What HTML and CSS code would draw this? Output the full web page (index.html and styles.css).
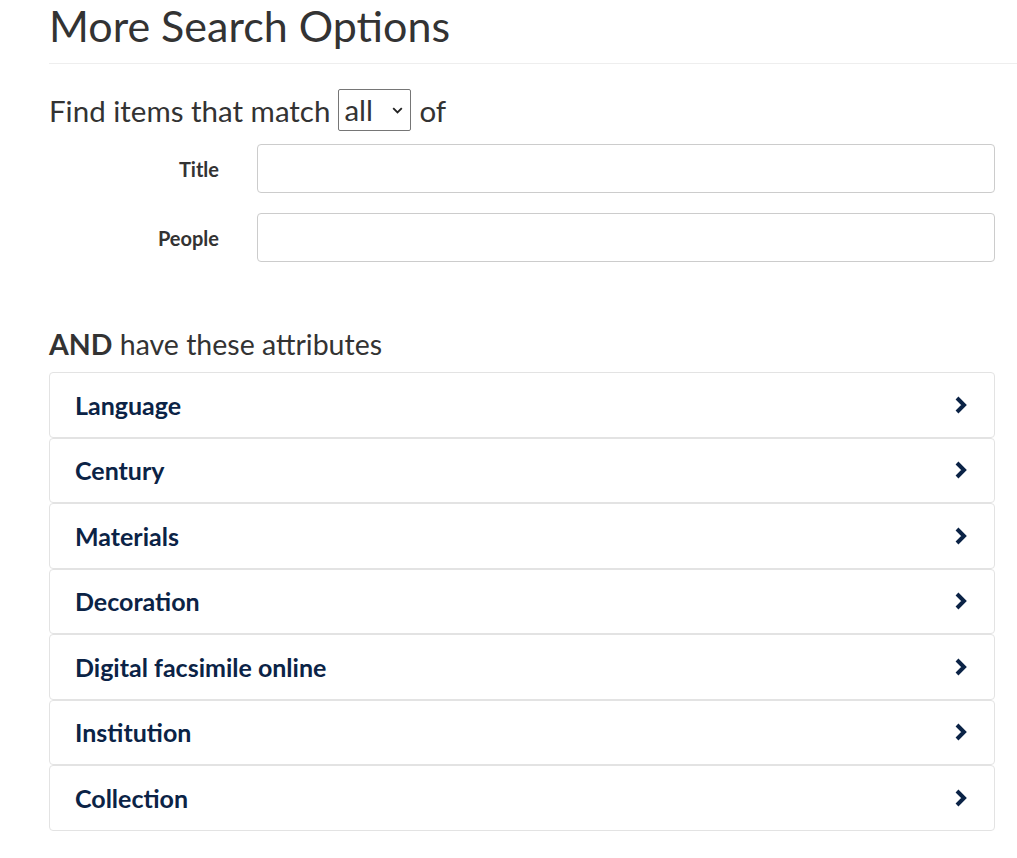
FILE: index.html
```html
<!DOCTYPE html>
<html lang="en">
<head>
<meta charset="utf-8">
<title>More Search Options</title>
<link rel="stylesheet" href="styles.css">
</head>
<body>
<main class="page">
  <h1 class="title">More Search Options</h1>
  <hr class="rule">
  <div class="match">
    <span>Find items that match</span>
    <span class="select"><span class="select-val">all</span><svg class="caret" width="11" height="7" viewBox="0 0 11 7"><polyline points="1.2,1.2 5.5,5.5 9.8,1.2" fill="none" stroke="#222" stroke-width="1.8"/></svg></span>
    <span>of</span>
  </div>
  <div class="field">
    <label class="field-label">Title</label>
    <div class="input"></div>
  </div>
  <div class="field">
    <label class="field-label">People</label>
    <div class="input"></div>
  </div>
  <h2 class="attrs"><strong>AND</strong> have these attributes</h2>
  <div class="accordion">
    <div class="item"><span>Language</span><svg class="chev" width="16" height="20" viewBox="0 0 16 20"><polyline points="4,3 11,10 4,17" fill="none" stroke="#0b2346" stroke-width="4"/></svg></div>
    <div class="item"><span>Century</span><svg class="chev" width="16" height="20" viewBox="0 0 16 20"><polyline points="4,3 11,10 4,17" fill="none" stroke="#0b2346" stroke-width="4"/></svg></div>
    <div class="item"><span>Materials</span><svg class="chev" width="16" height="20" viewBox="0 0 16 20"><polyline points="4,3 11,10 4,17" fill="none" stroke="#0b2346" stroke-width="4"/></svg></div>
    <div class="item"><span>Decoration</span><svg class="chev" width="16" height="20" viewBox="0 0 16 20"><polyline points="4,3 11,10 4,17" fill="none" stroke="#0b2346" stroke-width="4"/></svg></div>
    <div class="item"><span>Digital facsimile online</span><svg class="chev" width="16" height="20" viewBox="0 0 16 20"><polyline points="4,3 11,10 4,17" fill="none" stroke="#0b2346" stroke-width="4"/></svg></div>
    <div class="item"><span>Institution</span><svg class="chev" width="16" height="20" viewBox="0 0 16 20"><polyline points="4,3 11,10 4,17" fill="none" stroke="#0b2346" stroke-width="4"/></svg></div>
    <div class="item"><span>Collection</span><svg class="chev" width="16" height="20" viewBox="0 0 16 20"><polyline points="4,3 11,10 4,17" fill="none" stroke="#0b2346" stroke-width="4"/></svg></div>
  </div>
</main>
</body>
</html>
```
FILE: styles.css
```css
html, body {
  margin: 0;
  padding: 0;
  background: #fff;
}
body {
  font-family: Lato, "Open Sans", sans-serif;
  color: #333;
  overflow: hidden;
}
.page {
  padding: 0 22px 0 49px;
}
.title {
  margin: 0;
  font-weight: 400;
  font-size: 43px;
  line-height: 52px;
  color: #333;
}
.rule {
  margin: 11px -22px 0 0;
  border: 0;
  border-top: 1px solid #eee;
  height: 0;
}
.match {
  display: flex;
  align-items: center;
  gap: 8px;
  margin-top: 25px;
  height: 42px;
  font-size: 29.5px;
}
.select {
  box-sizing: border-box;
  display: inline-flex;
  align-items: center;
  justify-content: space-between;
  width: 73px;
  height: 42px;
  border: 1px solid #767676;
  border-radius: 2px;
  padding: 0 7px 0 5px;
  margin-left: 0;
}
.select-val {
  font-size: 29.5px;
  line-height: 1;
}
.caret {
  display: block;
}
.field {
  display: flex;
  align-items: center;
  margin-top: 13px;
}
.field + .field {
  margin-top: 20px;
}
.field-label {
  width: 170px;
  text-align: right;
  font-weight: 700;
  font-size: 20px;
  padding-right: 38px;
  box-sizing: content-box;
}
.input {
  flex: 1;
  box-sizing: border-box;
  height: 49px;
  border: 1px solid #ccc;
  border-radius: 4px;
}
.attrs {
  margin: 64px 0 0;
  font-size: 28.5px;
  font-weight: 400;
  line-height: 36px;
}
.attrs strong {
  font-weight: 700;
}
.accordion {
  margin-top: 10px;
}
.item {
  box-sizing: border-box;
  height: 65.5px;
  display: flex;
  align-items: center;
  justify-content: space-between;
  border: 1px solid #e3e3e3;
  border-radius: 4px;
  padding: 0 25px 0 25px;
  font-weight: 700;
  font-size: 25px;
  color: #0b2346;
}
.chev {
  display: block;
}
```
